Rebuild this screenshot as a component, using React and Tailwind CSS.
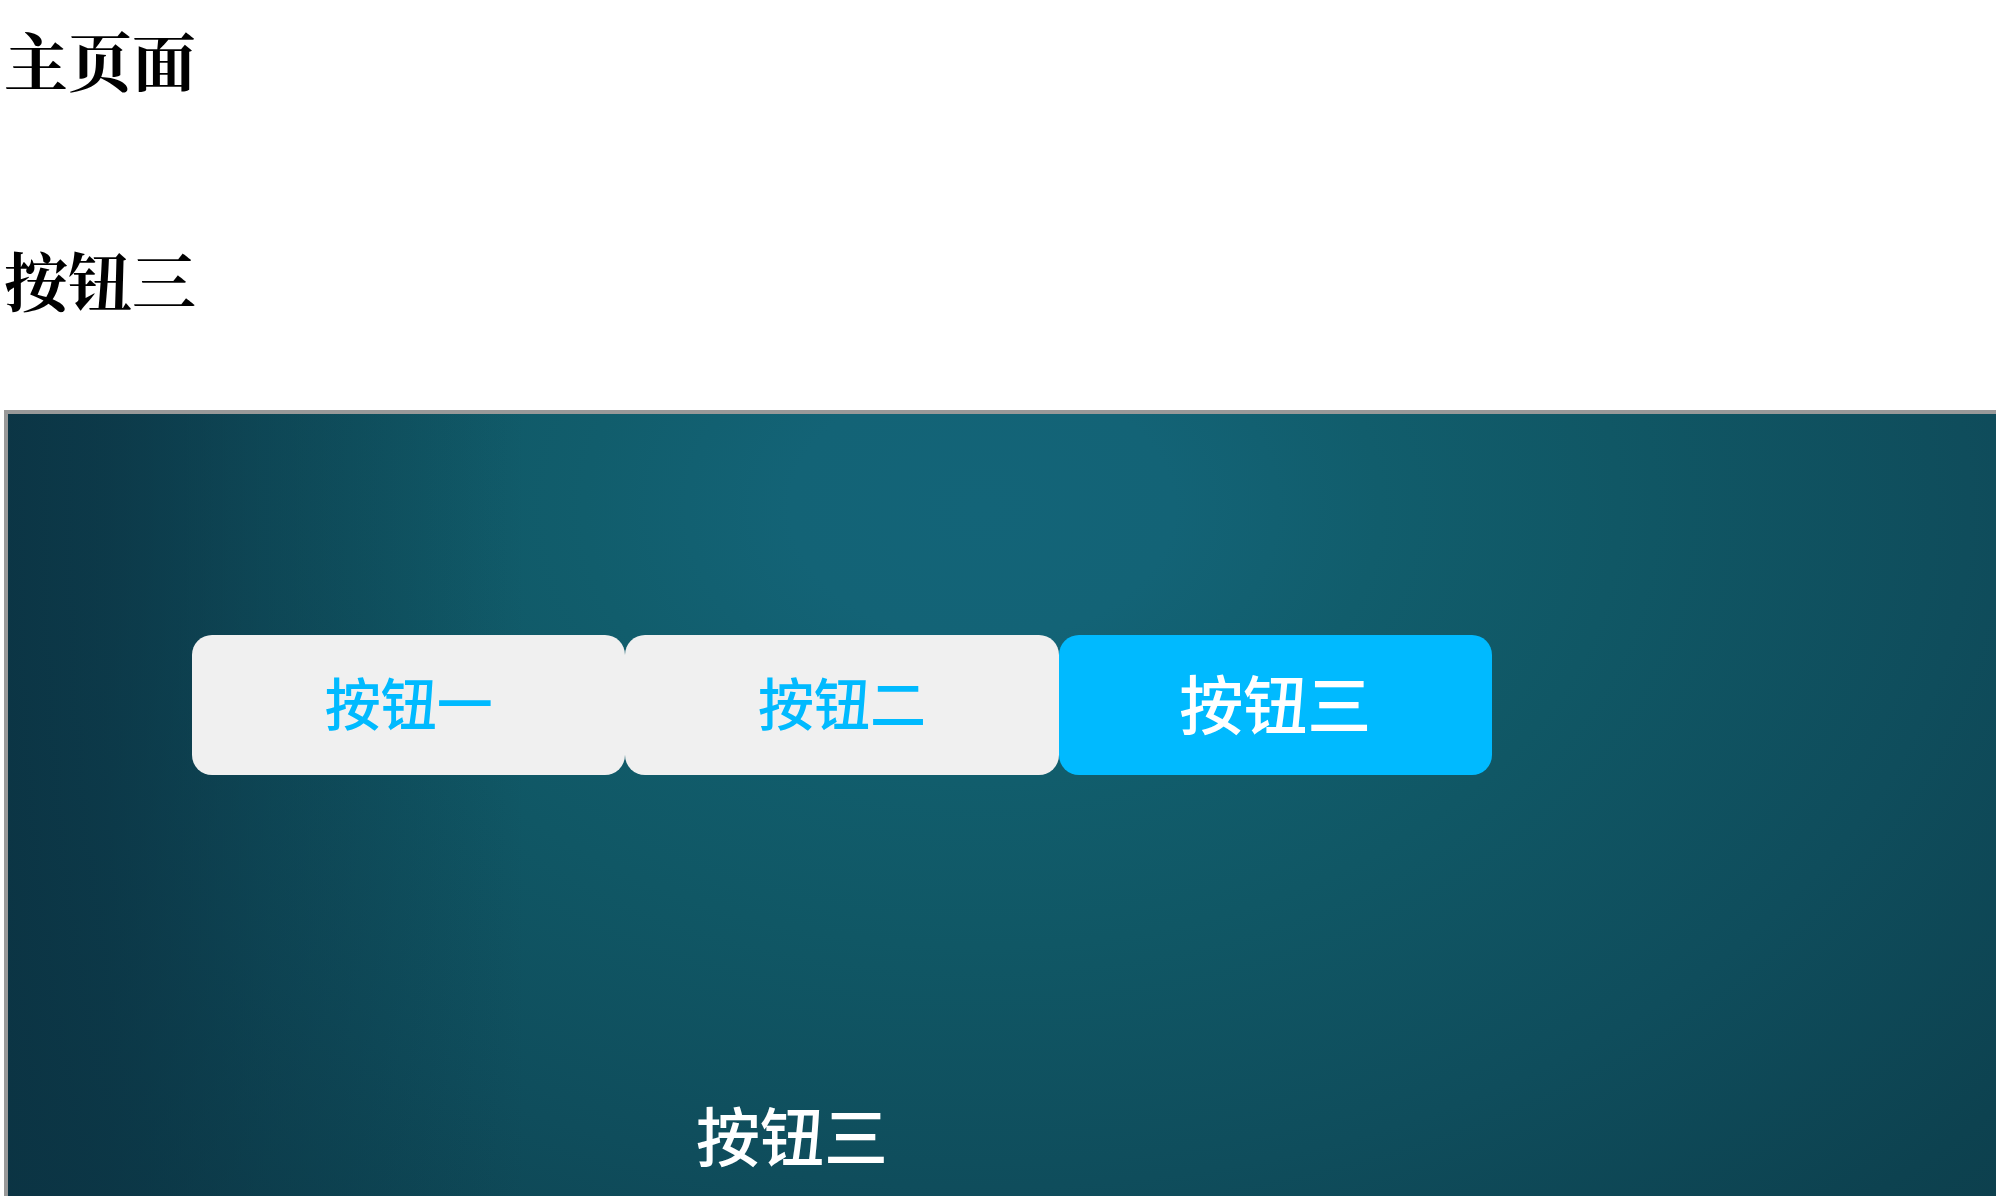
import { useState } from "react";

const labels = ["按钮一", "按钮二", "按钮三"];

export default function App() {
  const [active, setActive] = useState(2);

  return (
    <div className="flex h-screen flex-col overflow-hidden bg-white pl-1 font-['Noto_Sans_CJK_SC',sans-serif]">
      <header className="flex flex-col gap-37 pt-[22px] pb-24 font-['Noto_Serif_CJK_SC','Songti_SC','Noto_Sans_CJK_SC',serif] text-[64px] leading-[72px] font-bold text-black">
        <h1>主页面</h1>
        <h2>{labels[active]}</h2>
      </header>
      <main className="flex-1 border-t-4 border-l-4 border-[#999999] bg-[linear-gradient(90deg,rgba(11,50,66,0.88)_0%,rgba(11,50,66,0.75)_5%,rgba(11,50,66,0.4)_13%,rgba(11,50,66,0)_26%),radial-gradient(ellipse_80%_140%_at_49%_12%,#136478_0%,#136376_12%,#115d6c_25%,#105765_40%,#0f4d5c_62%,#0d4250_84%,#0c3c49_100%)] bg-clip-padding pt-[221px] pl-46">
        <div className="grid w-[1300px] max-w-full grid-cols-3">
          {labels.map((label, i) => (
            <button
              key={label}
              type="button"
              aria-pressed={i === active}
              onClick={() => setActive(i)}
              className={
                i === active
                  ? "h-[140px] rounded-[20px] bg-[#00baff] pb-2 text-[64px] leading-[72px] font-medium text-white"
                  : "h-[140px] rounded-[20px] bg-[#f0f0f0] pb-2 text-[56px] leading-[72px] font-medium text-[#00baff]"
              }
            >
              {label}
            </button>
          ))}
        </div>
        <p className="mt-[322px] w-[1200px] max-w-full text-center text-[64px] leading-[72px] font-medium text-white">
          {labels[active]}
        </p>
      </main>
    </div>
  );
}
